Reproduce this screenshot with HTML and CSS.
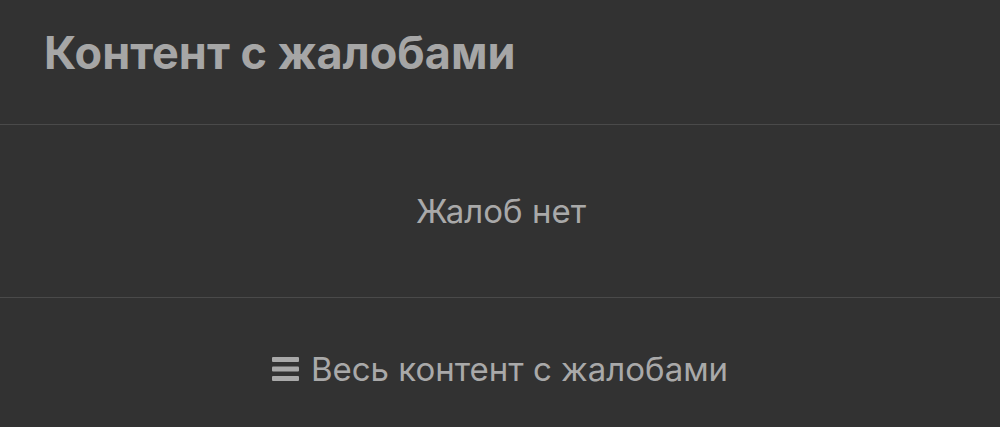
FILE: index.html
```html
<!DOCTYPE html>
<html lang="ru">
<head>
    <meta charset="UTF-8">
    <meta name="viewport" content="width=device-width, initial-scale=1.0">
    <title>Контент с жалобами</title>
    <link rel="stylesheet" href="styles.css">
</head>
<body>

    <div class="panel">
        <div class="panel-header">
            <h1>Контент с жалобами</h1>
        </div>
        <div class="panel-body">
            <p class="empty">Жалоб нет</p>
        </div>
        <div class="panel-footer">
            <a class="all-link" href="#">
                <svg class="list-icon" width="27" height="24" viewBox="0 0 27 24">
                    <rect x="0" y="0" width="27" height="5" rx="1"/>
                    <rect x="0" y="9.5" width="27" height="5" rx="1"/>
                    <rect x="0" y="19" width="27" height="5" rx="1"/>
                </svg>
                Весь контент с жалобами
            </a>
        </div>
    </div>

</body>
</html>
```

FILE: styles.css
```css
body {
    margin: 0;
    background-color: #323232;
    font-family: Inter, "Noto Sans", sans-serif;
    color: #a9a9a9;
}
.panel {
    width: 1000px;
}
.panel-header {
    height: 125px;
    display: flex;
    align-items: center;
    padding: 0 44px;
    border-bottom: 1px solid #4a4a4a;
    box-sizing: border-box;
}
h1 {
    margin: 0 0 20px;
    font-size: 45px;
    font-weight: 700;
    color: #a6a6a6;
}
.panel-body {
    height: 173px;
    display: flex;
    justify-content: center;
    align-items: center;
    border-bottom: 1px solid #4a4a4a;
    box-sizing: border-box;
}
.empty {
    margin: 0 0 0 2px;
    font-size: 33px;
}
.panel-footer {
    height: 129px;
    display: flex;
    justify-content: center;
    align-items: center;
}
.all-link {
    display: flex;
    align-items: center;
    gap: 12px;
    font-size: 33px;
    color: #a9a9a9;
    text-decoration: none;
    margin-top: 13px;
}
.list-icon {
    fill: #a9a9a9;
}
```
